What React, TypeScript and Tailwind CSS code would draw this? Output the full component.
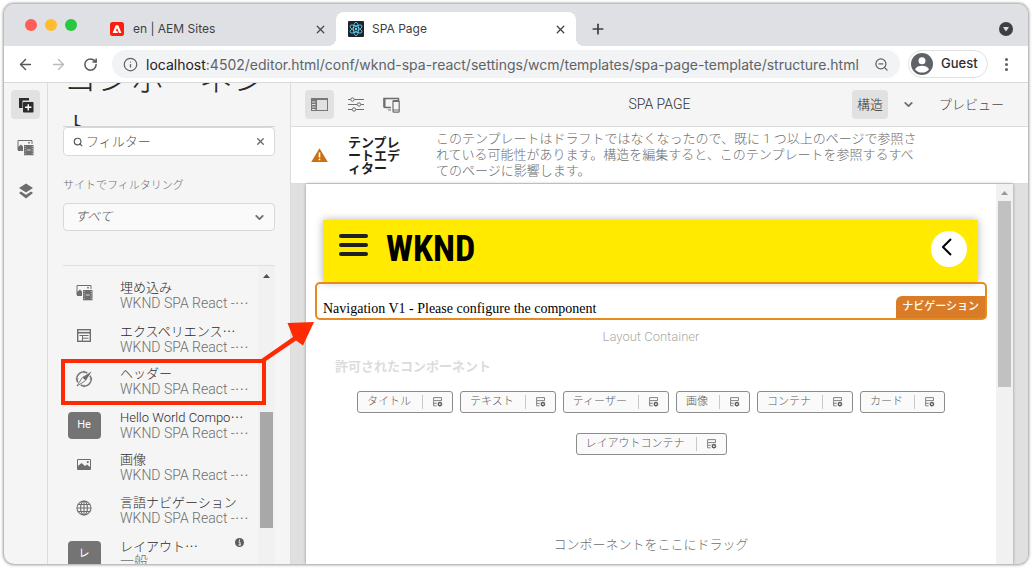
import React from "react";
import { ArrowLeft, ArrowRight, ChevronDown, Info, MoreVertical, Plus, RotateCw, Search, X, ZoomOut } from "lucide-react";

const ui = "font-['Roboto','Noto_Sans_CJK_JP',sans-serif]";

function ComponentsIcon() {
  return (
    <svg width="16" height="16" viewBox="0 0 16 16" fill="none" aria-hidden="true">
      <path d="M1 11V1h10v2.500H4.500V11z" fill="#2c2c2c" />
      <rect x="5" y="5" width="10.500" height="10.500" rx="0.800" fill="#2c2c2c" />
      <path d="M10.250 7.200v6.200M7.100 10.300h6.300" stroke="#fff" strokeWidth="1.400" />
    </svg>
  );
}

function AssetsIcon() {
  return (
    <svg width="17" height="17" viewBox="0 0 17 17" fill="none" aria-hidden="true">
      <path d="M1 11V1.500h14V5" stroke="#6e6e6e" />
      <path d="M1 12V8l3-2.500L6 7.500V12z" fill="#6e6e6e" />
      <circle cx="12" cy="3.700" r="0.900" fill="#6e6e6e" />
      <path d="M7 6h9.500v10.300H7z" fill="#6e6e6e" />
      <path d="M7.800 7.500h.8M7.800 9.700h.8M7.800 12h.8M7.800 14.500h.8M14.800 7.500h.8M14.800 9.700h.8M14.800 12h.8M14.800 14.500h.8M9.800 11h4" stroke="#f5f5f5" strokeWidth=".8" />
    </svg>
  );
}

function LayersIcon() {
  return (
    <svg width="16" height="16" viewBox="0 0 16 16" fill="#6e6e6e" aria-hidden="true">
      <path d="M8 .5 15 5 8 9.500 1 5z" />
      <path d="M3 8.500 8 11.800l5-3.300L15 10 8 15.500 1 10z" />
    </svg>
  );
}

function FragmentIcon() {
  return (
    <svg width="14" height="13" viewBox="0 0 14 13" fill="none" stroke="#6e6e6e" aria-hidden="true">
      <rect x="0.700" y="0.700" width="12.600" height="11.600" strokeWidth="1.400" />
      <path d="M1 3.700h12" strokeWidth="1.600" />
      <path d="M5.500 6v6M2.500 6.500h9M5.500 9.200h6" />
    </svg>
  );
}

function CompassIcon() {
  return (
    <svg width="18" height="18" viewBox="0 0 18 18" fill="none" stroke="#6e6e6e" aria-hidden="true">
      <path d="M12.300 3.100A6.700 6.700 0 0 0 3 12.400M5.700 14.900A6.700 6.700 0 0 0 15 5.600" strokeWidth="1.500" />
      <path d="M16.600 1.400 10.800 10.800 7.200 7.200z" fill="#6e6e6e" stroke="none" />
      <path d="M7.400 7.400 2 16l8.600-5.400" strokeWidth=".9" />
      <path d="M9 .800v2.400M.8 9h2.400M9 14.800v2.400M14.800 9h2.400" strokeWidth=".9" />
    </svg>
  );
}

function ImageIcon() {
  return (
    <svg width="14" height="11" viewBox="0 0 14 11" aria-hidden="true">
      <path d="M.5.500h13v10H.5z" fill="#f5f5f5" stroke="#6e6e6e" />
      <path d="M1 10V7l3.500-3L8 7l2-1.500L13 8v2z" fill="#6e6e6e" />
      <circle cx="10.800" cy="3.100" r="1.100" fill="#6e6e6e" />
    </svg>
  );
}

function GlobeIcon() {
  return (
    <svg width="16" height="16" viewBox="0 0 16 16" fill="none" stroke="#6e6e6e" strokeWidth="1.100" aria-hidden="true">
      <circle cx="8" cy="8" r="7" />
      <ellipse cx="8" cy="8" rx="3.400" ry="7" />
      <path d="M8 1v14M1 8h14M2 4.500h12M2 11.500h12" />
    </svg>
  );
}

function PolicyIcon() {
  return (
    <svg width="10" height="10" viewBox="0 0 10 10" fill="none" stroke="#777" aria-hidden="true">
      <path d="M8.500 3.800V.600H.6v3h7.900M.6 3.600v5.200h3M.6 6.300h3.200" strokeWidth=".9" />
      <circle cx="6.900" cy="7.200" r="1.500" stroke="#555" strokeWidth="1.200" />
      <path d="M6.900 4.700v1M6.900 8.700v1M4.400 7.200h1M8.400 7.200h1M5.100 5.400l.7.7M8 8.300l.7.7M8.700 5.400l-.7.7M5.800 8.300l-.7.7" stroke="#555" strokeWidth=".8" />
    </svg>
  );
}

function Badge({ text }: { text: string }) {
  return (
    <span className="mt-2 flex h-[27px] w-[33px] items-center justify-center rounded-sm bg-[#747474] text-[11px] text-white">
      {text}
    </span>
  );
}

function Dots() {
  return <span className="font-['Noto_Sans_CJK_JP',sans-serif]">…</span>;
}

type Item = { title: string; cut?: boolean; sub: string; subCut?: boolean; icon: React.ReactNode; info?: boolean };

const pkg = "WKND SPA React -";
const items: Item[] = [
  { title: "埋め込み", sub: pkg, subCut: true, icon: <AssetsIcon /> },
  { title: "エクスペリエンス", cut: true, sub: pkg, subCut: true, icon: <FragmentIcon /> },
  { title: "ヘッダー", sub: pkg, subCut: true, icon: <CompassIcon /> },
  { title: "Hello World Compo", cut: true, sub: pkg, subCut: true, icon: <Badge text="He" /> },
  { title: "画像", sub: pkg, subCut: true, icon: <ImageIcon /> },
  { title: "言語ナビゲーション", sub: pkg, subCut: true, icon: <GlobeIcon /> },
  { title: "レイアウト", cut: true, sub: "一般", icon: <Badge text="レ" />, info: true },
];

const allowed = ["タイトル", "テキスト", "ティーザー", "画像", "コンテナ", "カード", "レイアウトコンテナ"];

function TabBar() {
  return (
    <div className="flex h-[42px] shrink-0 items-end bg-[#dee0e4]">
      <div className="flex h-full w-[92px] shrink-0 items-center gap-2 pl-[21px]">
        <button aria-label="Close" className="size-3 rounded-full bg-[#fe5e57]" />
        <button aria-label="Minimize" className="size-3 rounded-full bg-[#febc2e]" />
        <button aria-label="Zoom" className="size-3 rounded-full bg-[#28c840]" />
      </div>
      <div className="flex h-[34px] w-60 items-center pl-3.5 pr-[9px]">
        <svg width="14" height="14" viewBox="0 0 14 14" aria-hidden="true">
          <rect width="14" height="14" rx="2.500" fill="#fa1e0e" />
          <path d="M5.700 3.200h2.600L11.400 11H9.100L7 6l-1.200 3h1.500l.7 2H2.600z" fill="#fff" />
        </svg>
        <span className="ml-[9px] flex-1 text-[12px] text-[#3c4043]">en | AEM Sites</span>
        <button aria-label="Close tab"><X size={13} strokeWidth={2.4} color="#45494d" /></button>
      </div>
      <div className="relative flex h-[34px] w-60 items-center rounded-t-lg bg-white pl-3 pr-[9px]">
        <span className="absolute bottom-0 -left-2 size-2 bg-[radial-gradient(circle_at_0_0,#dee0e4_8px,#fff_8px)]" />
        <span className="absolute bottom-0 -right-2 size-2 bg-[radial-gradient(circle_at_100%_0,#dee0e4_8px,#fff_8px)]" />
        <svg width="16" height="16" viewBox="0 0 16 16" fill="none" stroke="#61dafb" strokeWidth=".8" aria-hidden="true">
          <rect width="16" height="16" rx="1" fill="#20232a" stroke="none" />
          <ellipse cx="8" cy="8" rx="2.600" ry="6.700" />
          <ellipse cx="8" cy="8" rx="2.600" ry="6.700" transform="rotate(60 8 8)" />
          <ellipse cx="8" cy="8" rx="2.600" ry="6.700" transform="rotate(120 8 8)" />
          <circle cx="8" cy="8" r="1.200" fill="#61dafb" stroke="none" />
        </svg>
        <span className="ml-2 flex-1 text-[12px] text-[#3c4043]">SPA Page</span>
        <button aria-label="Close tab"><X size={13} strokeWidth={2.400} color="#3c4043" /></button>
      </div>
      <div className="flex h-[34px] flex-1 items-center justify-between pl-3.5 pr-[15px]">
        <button aria-label="New tab"><Plus size={16} strokeWidth={2.600} color="#3c4043" /></button>
        <button aria-label="Search tabs">
          <svg width="14" height="14" viewBox="0 0 14 14" aria-hidden="true">
            <circle cx="7" cy="7" r="7" fill="#3c4043" />
            <path d="M4 5h6L7 9.500z" fill="#dee0e4" />
          </svg>
        </button>
      </div>
    </div>
  );
}

function AddressBar() {
  return (
    <div className="flex h-[37px] shrink-0 items-center border-b border-[#d9dadc] bg-white pl-[13px]">
      <div className="flex w-[95px] shrink-0 items-center gap-4">
        <button aria-label="Back"><ArrowLeft size={17} color="#55595e" /></button>
        <button aria-label="Forward"><ArrowRight size={17} color="#b9bbbe" /></button>
        <button aria-label="Reload"><RotateCw size={15} strokeWidth={2.400} color="#55595e" /></button>
      </div>
      <div className="flex h-7 min-w-0 flex-1 items-center rounded-full bg-[#f1f3f4] pl-[11px] pr-[11px]">
        <Info size={15} color="#5f6368" />
        <p className="ml-2 flex-1 whitespace-nowrap text-[14px] text-[#5f6368]">
          <span className="text-[#202124]">localhost</span>:4502/editor.html/conf/wknd-spa-react/settings/wcm/templates/spa-page-template/structure.html
        </p>
        <button aria-label="Zoom out"><ZoomOut size={15} color="#5f6368" /></button>
      </div>
      <button className="ml-2 flex h-7 w-20 shrink-0 items-center gap-2 rounded-full border border-[#dfe1e4] pl-0.5 text-[13px] font-medium text-[#2b2d30]">
        <svg width="22" height="22" viewBox="0 0 22 22" aria-hidden="true">
          <circle cx="11" cy="11" r="11" fill="#5f6368" />
          <circle cx="11" cy="7.700" r="3.500" fill="#fff" />
          <path d="M4 16.200c1.200-2.300 4-3.400 7-3.400s5.800 1.100 7 3.400c-1.600 2.200-4.100 3.400-7 3.400s-5.400-1.200-7-3.400z" fill="#fff" />
        </svg>
        Guest
      </button>
      <button aria-label="Menu" className="ml-2.5 mr-[13px]"><MoreVertical size={17} strokeWidth={2.400} color="#5f6368" /></button>
    </div>
  );
}

function Rail() {
  return (
    <nav className="flex w-11 shrink-0 flex-col items-center gap-3.5 border-r border-[#dcdcdc] pt-[7px]">
      <button aria-label="コンポーネント" className="flex size-[29px] items-center justify-center rounded-sm bg-[#e1e1e1]"><ComponentsIcon /></button>
      <button aria-label="アセット" className="flex size-[29px] items-center justify-center"><AssetsIcon /></button>
      <button aria-label="コンテンツツリー" className="flex size-[29px] items-center justify-center"><LayersIcon /></button>
    </nav>
  );
}

function SidePanel() {
  return (
    <aside className={`flex w-[243px] shrink-0 flex-col border-r border-[#dcdcdc] px-[15px] ${ui}`}>
      <div className="h-11 shrink-0 overflow-hidden border-b border-[#d4d4d4]">
        <h1 className="-mt-[29px] text-[34px] font-light leading-[50px] text-[#2c2c2c]">コンポーネント</h1>
      </div>
      <div className="flex h-[29px] shrink-0 items-center rounded-sm border border-[#d8d8d8] bg-white pl-[9px] pr-2">
        <Search size={10} strokeWidth={2.800} color="#5a5a5a" />
        <input aria-label="フィルター" placeholder="フィルター" className="ml-[3px] min-w-0 flex-1 text-[13px] font-light outline-none placeholder:text-[#555]" />
        <button aria-label="クリア"><X size={11} strokeWidth={2.800} color="#666" /></button>
      </div>
      <label htmlFor="site" className="mt-5 text-[11px] font-light leading-5 text-[#6e6e6e]">サイトでフィルタリング</label>
      <div className="relative mt-[7px] shrink-0">
        <select id="site" className="h-7 w-full appearance-none rounded-sm border border-[#d8d8d8] bg-[#fafafa] pl-[11px] text-[13px] font-light italic text-[#555]">
          <option>すべて</option>
        </select>
        <ChevronDown size={13} strokeWidth={3.400} color="#6e6e6e" className="pointer-events-none absolute right-[9px] top-2" />
      </div>
      <div className="mt-[34px] flex min-h-0 flex-1 border-t border-[#dfdfdf]">
        <ul className="min-w-0 flex-1 overflow-hidden pt-3.5">
          {items.map((it) => (
            <li key={it.title} className="flex h-[43px]">
              <span className="flex h-[25px] w-[42px] shrink-0 items-center justify-center">{it.icon}</span>
              <span className="ml-[15px] flex-1 whitespace-nowrap font-light">
                <span className="block text-[13px] leading-[15px] text-[#2c2c2c]">
                  {it.title}{it.cut && <Dots />}
                </span>
                <span className="block text-[14px] leading-[15px] text-[#6e6e6e]">{it.sub}{it.subCut && <Dots />}</span>
              </span>
              {it.info && (
                <svg width="9" height="9" viewBox="0 0 9 9" className="mr-3.5" aria-hidden="true">
                  <circle cx="4.500" cy="4.500" r="4.500" fill="#5e5e5e" />
                  <path d="M3.500 4h1.500v3M4.500 1.500v1.400M3.400 7h2.500" stroke="#f5f5f5" fill="none" />
                </svg>
              )}
            </li>
          ))}
        </ul>
        <div className="flex w-[17px] shrink-0 flex-col items-center bg-[#f1f1f1] pt-2">
          <svg width="7" height="4" viewBox="0 0 7 4" fill="#505050" aria-hidden="true"><path d="M3.500 0 7 4H0z" /></svg>
          <div className="mt-[134px] h-[116px] w-[13px] bg-[#a8a8a8]" />
        </div>
      </div>
    </aside>
  );
}

function EditorBar() {
  return (
    <header className="grid h-11 shrink-0 grid-cols-[1fr_auto_1fr] items-center border-b border-[#dcdcdc] text-[13px] font-light">
      <div className="flex items-center pl-3.5">
        <button aria-label="サイドパネルの切り替え" className="flex size-[29px] items-center justify-center rounded-sm bg-[#e1e1e1]">
          <svg width="17" height="13" viewBox="0 0 17 13" aria-hidden="true">
            <rect x="0.500" y="0.500" width="16" height="12" fill="none" stroke="#777" />
            <path d="M0 0h6v13H0zM0 0h17v2H0z" fill="#777" />
            <path d="M1 4h3.500M1 6.500h3.500M1 9h3.500M1 11.500h3.500" stroke="#e1e1e1" />
          </svg>
        </button>
        <button aria-label="ページ情報" className="ml-3.5">
          <svg width="16" height="15" viewBox="0 0 16 15" fill="none" stroke="#6e6e6e" aria-hidden="true">
            <path d="M0 2.500h2.500M6.500 2.500H16M0 7.500h9M13 7.500h3M0 12.500h4M8 12.500h8" />
            <circle cx="4.500" cy="2.500" r="1.700" />
            <circle cx="11" cy="7.500" r="1.700" />
            <circle cx="6" cy="12.500" r="1.700" />
          </svg>
        </button>
        <button aria-label="エミュレーター" className="ml-[19px]">
          <svg width="17" height="16" viewBox="0 0 17 16" fill="none" stroke="#6e6e6e" aria-hidden="true">
            <path d="M8 10.500H2.200a1.200 1.200 0 0 1-1.200-1.200V1.500h14.500V3" strokeWidth="1.400" />
            <path d="M1.500 1v9.500" strokeWidth="2" />
            <rect x="10" y="3.700" width="6.200" height="11.500" rx=".8" strokeWidth="1.200" />
            <path d="M5 13h3M10 4.500h6M10 13h6" />
          </svg>
        </button>
      </div>
      <h2 className="text-[14px] text-[#323232]">SPA PAGE</h2>
      <div className="flex items-center justify-end pr-6">
        <button className="flex h-[29px] w-9 items-center justify-center rounded-sm bg-[#e1e1e1] text-[#323232]">構造</button>
        <button aria-label="モードを選択" className="ml-3.5 mr-6"><ChevronDown size={13} strokeWidth={3.400} color="#6e6e6e" /></button>
        <button className="text-[#4b4b4b]">プレビュー</button>
      </div>
    </header>
  );
}

function Notice() {
  return (
    <section className="flex h-[57px] shrink-0 items-center border-b border-[#dcdcdc] bg-white pl-5">
      <svg width="17" height="14" viewBox="0 0 17 14" aria-hidden="true">
        <path d="M8.500.300 16.800 14H.2z" fill="#cb6f10" strokeLinejoin="round" />
        <path d="M8.500 4.500v5M8.500 10.700v1.600" stroke="#fff" strokeWidth="1.600" />
      </svg>
      <h3 className="ml-5 w-[54px] text-[13px] font-bold leading-[13px] text-[#1f1f1f]">テンプレートエディター</h3>
      <p className="ml-[34px] max-w-[488px] text-[13px] font-light leading-4 text-[#6e6e6e]">
        このテンプレートはドラフトではなくなったので、既に 1 つ以上のページで参照されている可能性があります。構造を編集すると、このテンプレートを参照するすべてのページに影響します。
      </p>
    </section>
  );
}

function PagePreview() {
  return (
    <div className="flex min-h-0 flex-1 bg-[#e0e0e0] px-[15px]">
      <div className="flex flex-1 bg-white shadow-[0_0_3px_rgba(0,0,0,0.35)]">
        <div className="flex min-w-0 flex-1 flex-col pt-9">
          <div className="ml-[17px] mr-[18px] flex h-[62px] shrink-0 items-start bg-[#ffea00] pl-4 pr-[11px] shadow-[0_0_8px_rgba(0,0,0,0.3)]">
            <button aria-label="メニュー" className="mt-3.5 flex flex-col gap-[5px]">
              <span className="h-1 w-[29px] rounded-full bg-[#202020]" />
              <span className="h-1 w-[29px] rounded-full bg-[#202020]" />
              <span className="h-1 w-[29px] rounded-full bg-[#202020]" />
            </button>
            <a href="#home" className="ml-[18px] mt-[9px] flex-1 font-['Roboto_Condensed','Liberation_Sans_Narrow',sans-serif] text-[36px] font-bold leading-10 text-black">WKND</a>
            <button aria-label="戻る" className="mt-[11px] flex size-9 items-center justify-center rounded-full bg-white">
              <svg width="10" height="18" viewBox="0 0 10 18" fill="none" stroke="#000" strokeWidth="2" className="mb-1 mr-1" aria-hidden="true"><path d="M9 1 1 9l8 8" /></svg>
            </button>
          </div>
          <div className="mx-[9px] flex h-[38px] shrink-0 items-end justify-between rounded-[5px] border-2 border-[#e68b1f]">
            <p className="pl-[6px] font-['Liberation_Serif',serif] text-[14px] leading-[18px] text-black">Navigation V1 - Please configure the component</p>
            <span className="flex h-[22px] items-center rounded-tl-md bg-[#da7b27] px-[6px] text-[11px] font-medium text-white">ナビゲーション</span>
          </div>
          <p className="mt-[7px] text-center text-[13px] font-light leading-5 text-[#aaa]">Layout Container</p>
          <h4 className="ml-[29px] mt-2.5 text-[13px] font-bold leading-5 text-[#dcdcdc]">許可されたコンポーネント</h4>
          <div className="mx-5 mt-3.5 flex flex-wrap justify-center gap-x-[7px] gap-y-5">
            {allowed.map((name) => (
              <button key={name} className="flex h-[22px] items-center rounded-[3px] border border-[#8c8c8c] bg-[#fafafa] px-[9px] text-[11px] font-light text-[#5a5a5a]">
                {name}
                <span className="ml-[11px] mr-2.5 h-3.5 w-px bg-[#c8c8c8]" />
                <PolicyIcon />
              </button>
            ))}
          </div>
          <p className="mt-20 text-center text-[13px] font-light leading-5 text-[#6e6e6e]">コンポーネントをここにドラッグ</p>
        </div>
        <div className="flex w-[17px] shrink-0 flex-col items-center bg-[#f1f1f1] pt-[7px]">
          <svg width="7" height="4" viewBox="0 0 7 4" fill="#9a9a9a" aria-hidden="true"><path d="M3.500 0 7 4H0z" /></svg>
          <div className="mt-1.5 h-[186px] w-[13px] bg-[#c1c1c1]" />
        </div>
      </div>
    </div>
  );
}

export default function App() {
  return (
    <div className="h-screen overflow-hidden bg-white p-1 font-['Inter','Noto_Sans_CJK_JP',sans-serif]">
      <div lang="ja" className="relative flex h-full flex-col overflow-hidden rounded-[10px] bg-[#f5f5f5] shadow-[0_0_3px_1px_rgba(0,0,0,0.4)]">
        <TabBar />
        <AddressBar />
        <div className="flex min-h-0 flex-1">
          <Rail />
          <SidePanel />
          <main className={`flex min-w-0 flex-1 flex-col ${ui}`}>
            <EditorBar />
            <Notice />
            <PagePreview />
          </main>
        </div>
        <div className="pointer-events-none absolute left-[57px] top-[355px] h-[46px] w-[205px] border-4 border-[#fe2a04]" />
        <svg width="60" height="44" viewBox="0 0 60 44" className="pointer-events-none absolute left-[252px] top-[316px]" aria-hidden="true">
          <path d="M1 42 37 17 31.500 3 58 2 47 25.500 40 20.500 7 43z" fill="#fe2a04" />
        </svg>
      </div>
    </div>
  );
}
